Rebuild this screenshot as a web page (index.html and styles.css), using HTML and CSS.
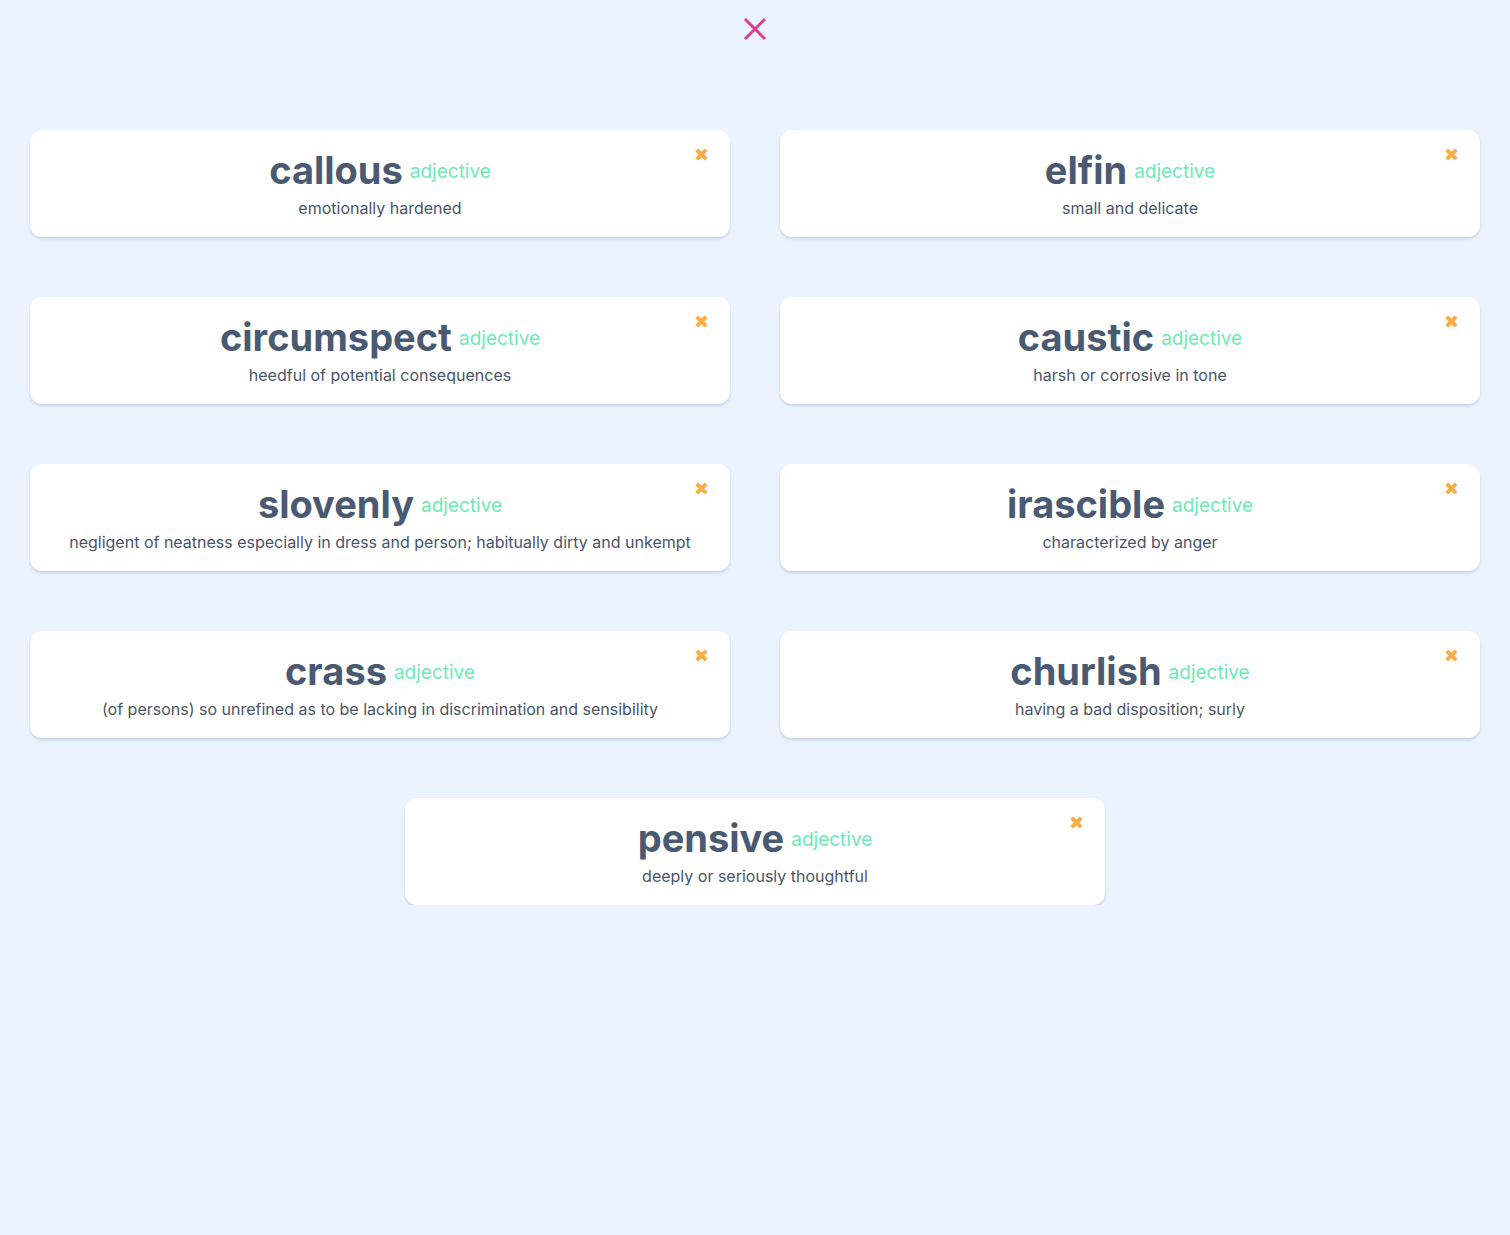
FILE: index.html
```html
<!DOCTYPE html>
<html lang="en">
<head>
<meta charset="utf-8">
<title>Words</title>
<link rel="stylesheet" href="styles.css">
</head>
<body>
<header class="top">
  <button class="close-all" aria-label="Close">
    <svg width="24" height="24" viewBox="0 0 24 24"><path d="M2 2 L22 22 M22 2 L2 22" stroke="#dd3f8f" stroke-width="3" stroke-linecap="butt" fill="none"/></svg>
  </button>
</header>
<main class="cards">
  <div class="card"><span class="remove">✖</span><div class="head"><span class="word">callous</span><span class="pos">adjective</span></div><p class="def">emotionally hardened</p></div>
  <div class="card"><span class="remove">✖</span><div class="head"><span class="word">elfin</span><span class="pos">adjective</span></div><p class="def">small and delicate</p></div>
  <div class="card"><span class="remove">✖</span><div class="head"><span class="word">circumspect</span><span class="pos">adjective</span></div><p class="def">heedful of potential consequences</p></div>
  <div class="card"><span class="remove">✖</span><div class="head"><span class="word">caustic</span><span class="pos">adjective</span></div><p class="def">harsh or corrosive in tone</p></div>
  <div class="card"><span class="remove">✖</span><div class="head"><span class="word">slovenly</span><span class="pos">adjective</span></div><p class="def">negligent of neatness especially in dress and person; habitually dirty and unkempt</p></div>
  <div class="card"><span class="remove">✖</span><div class="head"><span class="word">irascible</span><span class="pos">adjective</span></div><p class="def">characterized by anger</p></div>
  <div class="card"><span class="remove">✖</span><div class="head"><span class="word">crass</span><span class="pos">adjective</span></div><p class="def">(of persons) so unrefined as to be lacking in discrimination and sensibility</p></div>
  <div class="card"><span class="remove">✖</span><div class="head"><span class="word">churlish</span><span class="pos">adjective</span></div><p class="def">having a bad disposition; surly</p></div>
  <div class="card"><span class="remove">✖</span><div class="head"><span class="word">pensive</span><span class="pos">adjective</span></div><p class="def">deeply or seriously thoughtful</p></div>
</main>
</body>
</html>
```
FILE: styles.css
```css
html, body {
  margin: 0;
  padding: 0;
  background: #ebf3fe;
  font-family: "Inter", "Noto Sans", sans-serif;
  color: #4a5568;
}
.top {
  display: flex;
  justify-content: center;
  padding-top: 17px;
  height: 130px;
  box-sizing: border-box;
}
.close-all {
  border: 0;
  background: none;
  padding: 0;
  width: 24px;
  height: 24px;
  cursor: pointer;
}
.close-all svg { display: block; }
.cards {
  display: flex;
  flex-wrap: wrap;
  justify-content: center;
  gap: 60px 50px;
  padding: 0 30px;
}
.card {
  position: relative;
  width: 700px;
  height: 107px;
  box-sizing: border-box;
  background: #fff;
  border-radius: 12px;
  box-shadow: 0 2px 3px rgba(80, 100, 140, 0.22);
  text-align: center;
  padding-top: 17px;
}
.remove {
  position: absolute;
  top: 14px;
  right: 21px;
  color: #f6ad45;
  font-size: 18px;
  font-family: "DejaVu Sans", sans-serif;
}
.head {
  display: flex;
  justify-content: center;
  align-items: baseline;
  gap: 7px;
}
.word {
  font-size: 38px;
  font-weight: 700;
  color: #4a5a72;
  line-height: 46px;
}
.pos {
  font-size: 19px;
  color: #6eeab5;
  position: relative;
  top: -6px;
}
.def {
  margin: 4px 0 0;
  font-size: 16px;
  line-height: 22px;
  color: #4a5568;
}
```
